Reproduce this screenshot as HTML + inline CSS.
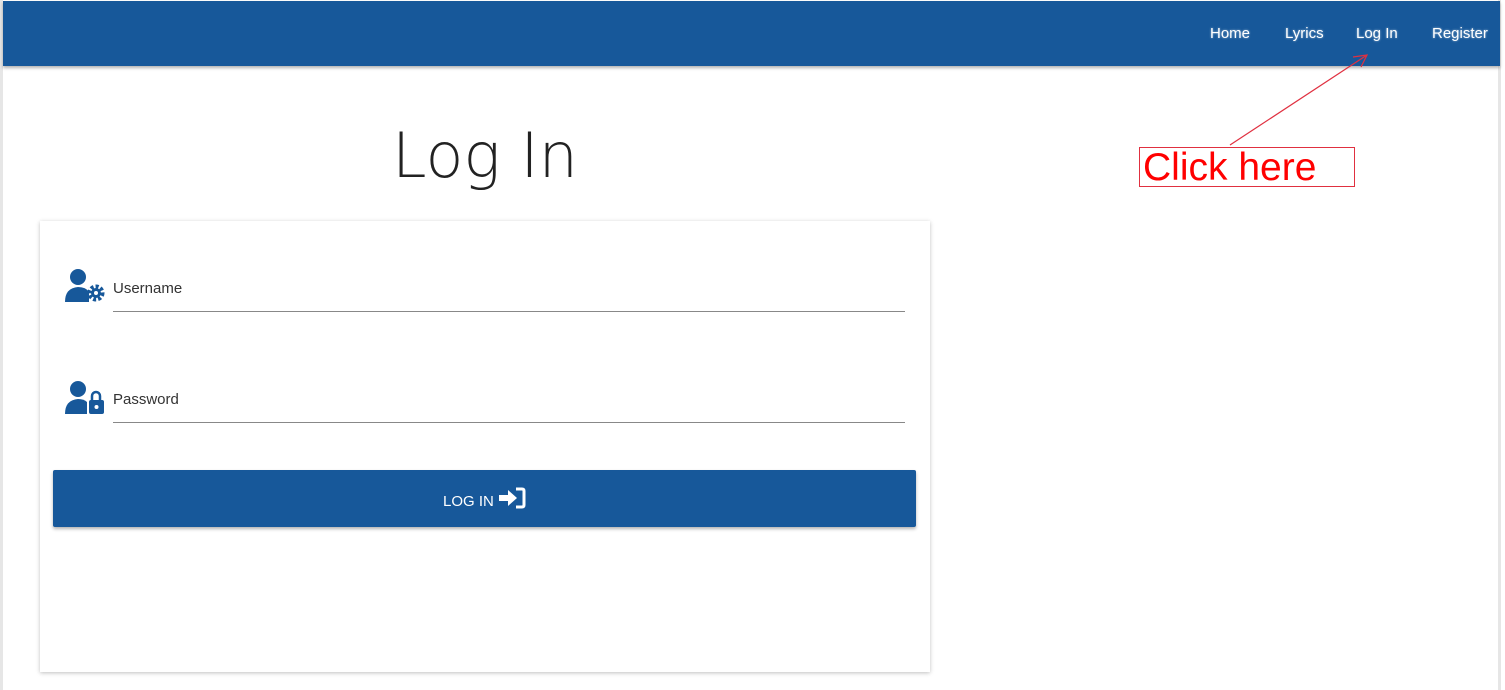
<!DOCTYPE html>
<html><head><style>
body{margin:0;width:1505px;height:690px;background:#fff;position:relative;overflow:hidden;font-family:"Segoe UI","Liberation Sans",sans-serif}
.frame{position:absolute;left:0;top:0;width:1501px;height:690px;border-left:3px solid #e6e6e6;border-right:3px solid #e6e6e6;box-sizing:border-box}
.nav{position:absolute;left:3px;top:1px;width:1497px;height:65px;background:#17589a;box-shadow:0 2px 3px rgba(0,0,0,.3)}
.nav a{position:absolute;top:24px;color:#fff;font-size:15px;text-shadow:0 0 2px rgba(255,255,255,.6)}
h1{position:absolute;left:0;width:970px;text-align:center;top:119px;margin:0;font-weight:300;font-size:62px;color:#222;font-family:"DejaVu Sans","Liberation Sans",sans-serif;letter-spacing:0}
.card{position:absolute;left:40px;top:221px;width:890px;height:451px;background:#fff;box-shadow:0 1px 4px rgba(0,0,0,.25)}
.field{position:absolute;left:113px;width:792px;border-bottom:1px solid #888;font-size:15px;color:#333}
.btn{position:absolute;left:53px;top:470px;width:863px;height:57px;background:#17589a;border-radius:2px;box-shadow:0 2px 3px rgba(0,0,0,.3);color:#fff;font-size:15px;text-align:center;line-height:64px}
.click{position:absolute;left:1139px;top:147px;width:216px;height:40px;border:1px solid #e03040;color:#f00;font-family:"Liberation Sans",sans-serif;font-size:39px;line-height:40px;padding-left:3px;box-sizing:border-box;white-space:nowrap}
</style></head><body>
<div class="frame"></div>
<div class="nav">
<a style="left:1207px">Home</a><a style="left:1282px">Lyrics</a><a style="left:1353px">Log In</a><a style="left:1429px">Register</a>
</div>
<svg style="position:absolute;left:0;top:0" width="1505" height="690"><line x1="1230" y1="145" x2="1367" y2="55" stroke="#e03040" stroke-width="1.2"/><polyline points="1353,57 1367,55 1361,67" fill="none" stroke="#e03040" stroke-width="1.2"/></svg>
<h1>Log In</h1>
<div class="click">Click here</div>
<div class="card"></div>
<svg style="position:absolute;left:64px;top:268px" width="42" height="36"><circle cx="14" cy="9" r="8" fill="#17589a"/><path d="M1 34 Q1 20 14 19 Q22 19 25 24 L25 34Z" fill="#17589a"/><circle cx="32" cy="25" r="6.5" fill="none" stroke="#17589a" stroke-width="4" stroke-dasharray="3 2"/><circle cx="32" cy="25" r="5" fill="#17589a"/><circle cx="32" cy="25" r="2" fill="#fff"/></svg>
<div class="field" style="top:280px;height:31px">Username</div>
<svg style="position:absolute;left:64px;top:380px" width="42" height="36"><circle cx="14" cy="9" r="8" fill="#17589a"/><path d="M1 34 Q1 20 14 19 Q20 19 23 22 L23 34Z" fill="#17589a"/><path d="M28 20 V16 A4 4 0 0 1 36 16 V20" fill="none" stroke="#17589a" stroke-width="2.5"/><rect x="25" y="20" width="15" height="14" rx="2" fill="#17589a"/><circle cx="32.5" cy="27" r="2" fill="#fff"/></svg>
<div class="field" style="top:391px;height:31px">Password</div>
<div class="btn">LOG IN <svg width="28" height="22" style="vertical-align:-3px"><path d="M1 8 H10 V3 L19 11 L10 19 V14 H1Z" fill="#fff"/><path d="M18 2 H24 Q26 2 26 4 V18 Q26 20 24 20 H18" fill="none" stroke="#fff" stroke-width="3"/></svg></div>
</body></html>
